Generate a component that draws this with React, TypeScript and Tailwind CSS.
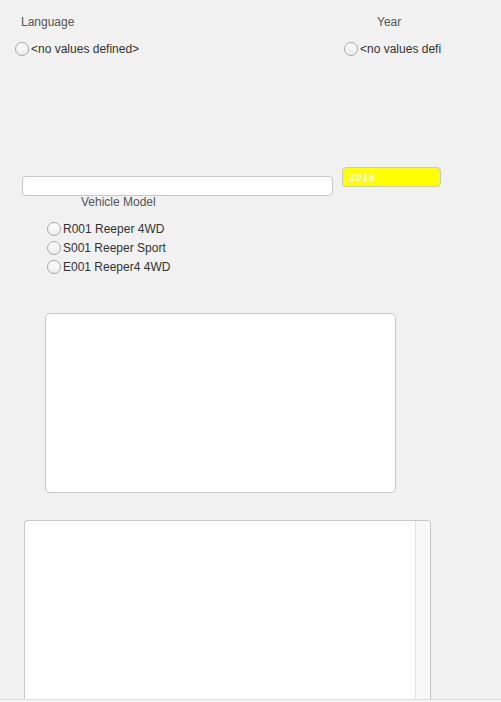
import React from "react";

function Radio() {
  return (
    <span className="inline-block w-[14px] h-[14px] rounded-full border border-[#a8a8a8] bg-gradient-to-b from-white to-[#ececec] shrink-0" />
  );
}

function RadioRow({ label, clip }: { label: string; clip?: boolean }) {
  return (
    <div className="flex items-center h-[19px]">
      <Radio />
      <span className={"ml-[2px] text-[#333] whitespace-nowrap " + (clip ? "overflow-hidden w-[81px]" : "")}>{label}</span>
    </div>
  );
}

export default function App() {
  return (
    <div
      className="w-[501px] h-[702px] bg-[#f1f1f1] overflow-hidden flex flex-col text-[12px] leading-[14px]"
      style={{ fontFamily: '"Liberation Sans", Arial, sans-serif' }}
    >
      {/* top row */}
      <div className="flex pt-[15px] h-[167px] shrink-0">
        <div className="w-[344px] pl-[15px] flex flex-col">
          <div className="pl-[6px] text-[#555] h-[14px]">Language</div>
          <div className="mt-[10px]">
            <RadioRow label="<no values defined>" />
          </div>
        </div>
        <div className="flex flex-col">
          <div className="pl-[33px] text-[#555] h-[14px]">Year</div>
          <div className="mt-[10px]">
            <RadioRow label="<no values defined>" clip />
          </div>
        </div>
      </div>

      {/* input + yellow field */}
      <div className="flex items-start h-[29px] shrink-0">
        <div className="ml-[22px] mt-[9px] w-[311px] h-[20px] bg-white border border-[#c8c8c8] rounded-[4px]" />
        <div className="ml-[9px] w-[99px] h-[20px] bg-[#ffff00] border border-[#c8c8c8] rounded-[4px] flex items-center pl-[6px]">
          <span
            className="text-white font-bold italic text-[13px]"
            style={{ fontFamily: '"Liberation Serif", "Times New Roman", serif' }}
          >
            2016
          </span>
        </div>
      </div>

      <div className="pl-[81px] text-[#555] h-[14px] mt-[-1px] shrink-0">Vehicle Model</div>

      <div className="pl-[47px] mt-[10px] flex flex-col shrink-0">
        <RadioRow label="R001 Reeper 4WD" />
        <RadioRow label="S001 Reeper Sport" />
        <RadioRow label="E001 Reeper4 4WD" />
      </div>

      <div className="ml-[45px] mt-[37px] w-[351px] h-[180px] bg-white border border-[#c8c8c8] rounded-[5px] shrink-0" />

      <div className="ml-[24px] mt-[27px] w-[407px] h-[179px] bg-white border border-[#c8c8c8] border-b-0 rounded-t-[4px] flex justify-end shrink-0 overflow-hidden">
        <div className="w-[15px] h-full bg-[#f8f8f8] border-l border-[#e4e4e4]" />
      </div>
      <div className="h-[1px] w-full bg-[#dcdcdc] shrink-0" />
      <div className="flex-1 bg-[#f4f4f4]" />
    </div>
  );
}
